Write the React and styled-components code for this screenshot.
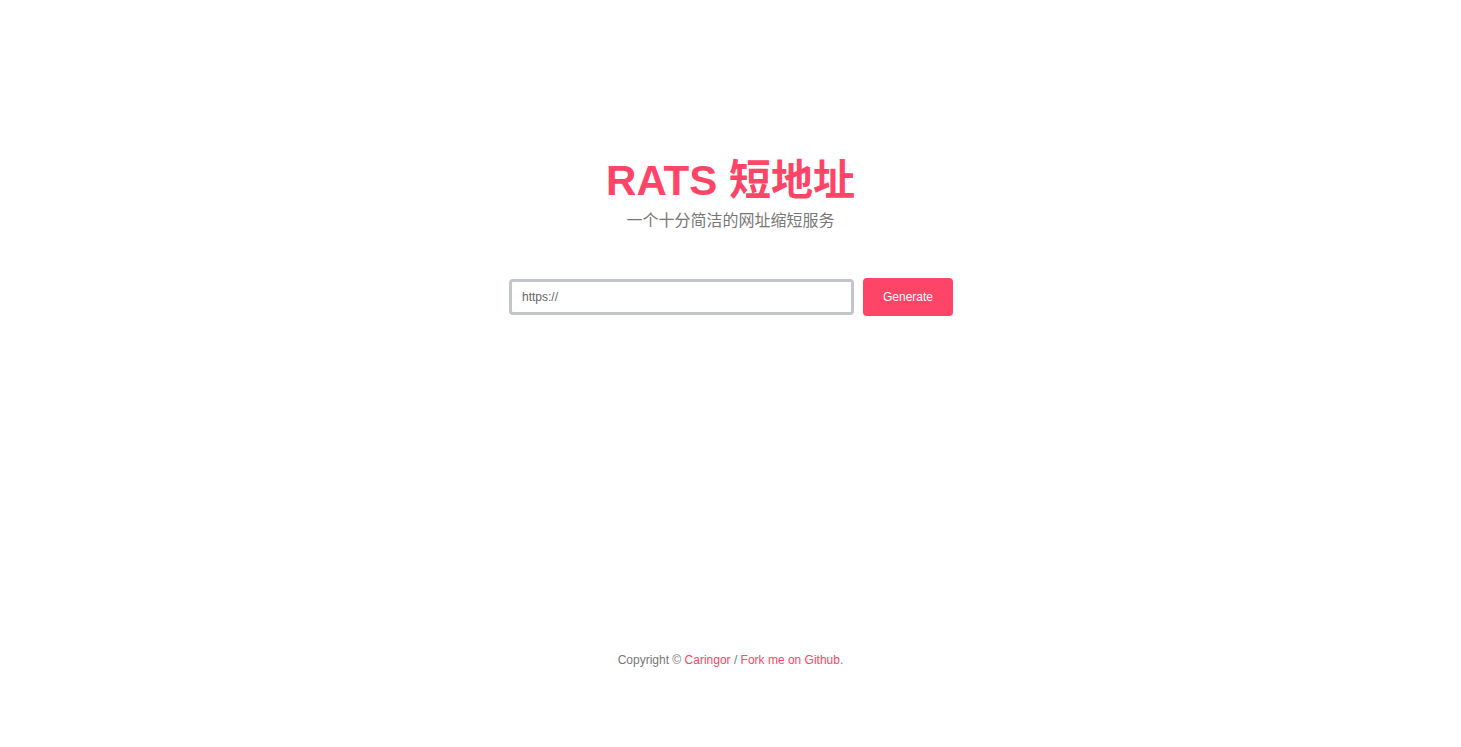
import React, { useState } from 'react';
import styled, { createGlobalStyle } from 'styled-components';

const GlobalStyle = createGlobalStyle`
    html, body {
        margin: 0;
        padding: 0;
        background: #fff;
    }
    body {
        font-family: 'Liberation Sans', Arial, 'Noto Sans CJK SC', sans-serif;
    }
`;

const App = () => {
    const [url, setUrl] = useState('');

    return (
        <Page>
            <GlobalStyle />
            <Main>
                <Title>RATS 短地址</Title>
                <Subtitle>一个十分简洁的网址缩短服务</Subtitle>
                <Form onSubmit={e => e.preventDefault()}>
                    <UrlInput
                        type='text'
                        placeholder='https://'
                        value={url}
                        onChange={e => setUrl(e.target.value)}
                    />
                    <Button type='submit'>Generate</Button>
                </Form>
            </Main>
            <Footer>
                Copyright © <a href='#'>Caringor</a> / <a href='#'>Fork me on Github</a>.
            </Footer>
        </Page>
    );
};

const Page = styled.div`
    min-height: 100vh;
    display: flex;
    flex-direction: column;
    align-items: center;
`;

const Main = styled.main`
    flex: 1;
    display: flex;
    flex-direction: column;
    align-items: center;
    padding-top: 156px;
`;

const Title = styled.h1`
    margin: 0;
    font-family: 'Liberation Sans', Arial, 'Noto Sans CJK SC', sans-serif;
    font-weight: 700;
    font-size: 42px;
    line-height: 50px;
    color: #ff4567;
`;

const Subtitle = styled.p`
    margin: 5px 0 0;
    font-size: 16px;
    line-height: 20px;
    color: #777;
`;

const Form = styled.form`
    display: flex;
    align-items: center;
    gap: 9px;
    margin-top: 47px;
    margin-left: 1px;
`;

const UrlInput = styled.input`
    box-sizing: border-box;
    width: 345px;
    height: 36px;
    padding: 0 10px;
    border: 3px solid #c2c5c9;
    border-radius: 4px;
    font-family: 'Liberation Sans', Arial, sans-serif;
    font-size: 12px;
    color: #555;
    outline: none;

    &::placeholder {
        color: #666;
    }
`;

const Button = styled.button`
    width: 90px;
    height: 38px;
    border: none;
    border-radius: 4px;
    background: #ff4567;
    color: #fff;
    font-family: 'Liberation Sans', Arial, sans-serif;
    font-size: 12px;
    cursor: pointer;
`;

const Footer = styled.footer`
    padding-bottom: 79px;
    font-size: 12px;
    line-height: 16px;
    color: #777;

    a {
        color: #ff4567;
        text-decoration: none;
    }
`;

export default App;
